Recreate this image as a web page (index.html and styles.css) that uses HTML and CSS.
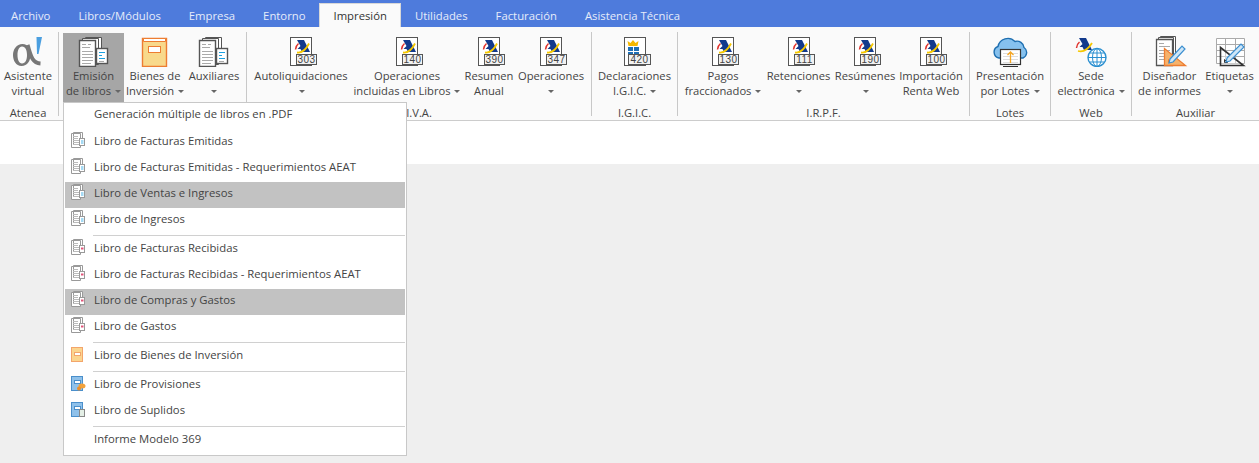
FILE: index.html
```html
<!DOCTYPE html>
<html lang="en">
<head>
    <meta charset="UTF-8">
    <title>Impresión</title>
    <link rel="stylesheet" href="styles.css">
</head>
<body>
    <!-- iconos -->
    <svg class="sprites" xmlns="http://www.w3.org/2000/svg">
        <symbol id="aeat-mark" viewBox="0 0 32 32">
            <path d="M12 5h7l6 12h-8l-1.500-3h-3l3-3z" fill="#123a8c"/>
            <path d="M10.500 14.500q.5-4 3-6" fill="none" stroke="#e0322c" stroke-width="1.500"/>
            <path d="M12 17.500q7 1 12-9" fill="none" stroke="#f6c800" stroke-width="1.800"/>
        </symbol>
        <symbol id="aeat-doc" viewBox="0 0 32 32">
            <rect x="5.500" y="2.500" width="21" height="28" fill="#fff" stroke="#555"/>
            <use href="#aeat-mark" width="32" height="32"/>
        </symbol>
        <symbol id="stack" viewBox="0 0 32 32">
            <path d="M7.500 2.500h16v26h-16z" fill="#fff" stroke="#555"/>
            <path d="M4.500 3.500h16v26h-16z" fill="#fff" stroke="#555"/>
            <path d="M1.500 5.500h16v26h-16z" fill="#fff" stroke="#555" stroke-width="1.400"/>
            <path d="M4 9.500h4M10 9.500h3M4 12.500h8M4 16.500h11M4 19.500h11M4 22.500h11M4 25.500h11M4 28.500h9" stroke="#aaa"/>
            <rect x="18.500" y="13.500" width="11" height="15" fill="#fff" stroke="#555" stroke-width="1.400"/>
            <path d="M21 17.500h6M21 20.500h3M21 23.500h6" stroke="#1ba1e2"/>
            <path d="M21 26.500h5" stroke="#aaa"/>
        </symbol>
        <symbol id="book" viewBox="0 0 32 32">
            <path d="M3.500 3.500h24v28h-24z" fill="#f8d98b" stroke="#ed7d31" stroke-width="1.400"/>
            <path d="M4.500 3.500h22v3h-22z" fill="#fff" stroke="#ed7d31"/>
            <rect x="9.500" y="11.500" width="12" height="6" fill="#fff" stroke="#ed7d31"/>
        </symbol>
        <symbol id="alpha" viewBox="0 0 32 32">
            <path fill-rule="evenodd" fill="#777" d="M10.500 9c-6 0-9.500 5.500-9.500 11s3 11 8.500 11c6 0 9-5.500 9-11s-2-11-8-11zM10 11.500c-3 0-4.500 4-4.500 8.500s1.500 8.500 4.500 8.500c3.500 0 5-4 5-8.500s-1.500-8.500-5-8.500z"/>
            <path d="M15.500 10c3 9 4 18 13 18.500" fill="none" stroke="#777" stroke-width="4"/>
            <path d="M24.500 2h5.500l-3.500 17h-1.500z" fill="#4b9fe0"/>
        </symbol>
        <symbol id="cloud" viewBox="0 0 36 32">
            <path d="M7 23a6 6 0 0 1-1-11.500a10 10 0 0 1 17-5a7 7 0 0 1 9 6a6 6 0 0 1-1 10.500z" fill="#86c1ee" stroke="#1f6fb0" stroke-width="1.400"/>
            <rect x="8.500" y="14.500" width="20" height="15" fill="#fff" stroke="#333" stroke-width="1.200"/>
            <path d="M11 31.500h15" stroke="#333"/>
            <path d="M11 18.500h15M11 21.500h15M11 24.500h15M11 27.500h15" stroke="#ddd"/>
            <path d="M18.500 28v-11M15.500 20l3-3 3 3" fill="none" stroke="#f5a623" stroke-width="1.300"/>
        </symbol>
        <symbol id="sede" viewBox="0 0 36 32">
            <path d="M6 3h7l6 12h-8l-1.500-3h-3l3-3z" fill="#123a8c"/>
            <path d="M3.500 13q.5-4 3-6" fill="none" stroke="#e0322c" stroke-width="1.500"/>
            <path d="M5 16q8 2 14-8" fill="none" stroke="#f6c800" stroke-width="1.800"/>
            <circle cx="24" cy="22.500" r="9" fill="#fff" stroke="#2a8fd0" stroke-width="1.400"/>
            <ellipse cx="24" cy="22.500" rx="4.500" ry="9" fill="none" stroke="#2a8fd0"/>
            <path d="M24 13.500v18M15 22.500h18M16.500 18h15M16.500 27h15" stroke="#2a8fd0"/>
        </symbol>
        <symbol id="designer" viewBox="0 0 36 32">
            <path d="M8.500 1.500h15v25h-15z" fill="#fff" stroke="#555"/>
            <path d="M6.500 2.500h15v26h-15z" fill="#fff" stroke="#555"/>
            <path d="M4.500 4.500h16v26h-16z" fill="#fff" stroke="#555" stroke-width="1.300"/>
            <path d="M7 8.500h5M7 11.500h11M7 15.500h11M7 18.500h5M7 21.500h5M7 24.500h5" stroke="#aaa"/>
            <path d="M12.500 13.500v17h21z" fill="#f6b26b" stroke="#ed7d31" stroke-width="1.300"/>
            <path d="M16.500 24.500v3h3z" fill="#fff" stroke="#ed7d31"/>
            <path d="M18 24l12-13 3 3-12 13-4 1z" fill="#cfe6f7" stroke="#3b8fd0" stroke-width="1.200"/>
        </symbol>
        <symbol id="labels" viewBox="0 0 36 32">
            <path d="M4.500 3.500h28v25h-28zM4.500 9.500h28M4.500 15.500h28M4.500 21.500h28M13.500 3.500v25M23.500 3.500v25" fill="#fff" stroke="#aaa"/>
            <path d="M8.500 12.500v18h23z" fill="#fff" fill-opacity=".4" stroke="#333" stroke-width="1.600"/>
            <path d="M12.500 24.500v3h3z" fill="none" stroke="#333"/>
            <path d="M15 23l14-14 3 3-14 14-4 1z" fill="#cfe6f7" stroke="#3b8fd0" stroke-width="1.200"/>
        </symbol>
        <symbol id="mini-blue" viewBox="0 0 16 16">
            <path d="M2.500.5h9v12h-9zM.5 1.500h9v14h-9z" fill="#fff" stroke="#999"/>
            <path d="M2 4.500h5M2 6.500h5M2 8.500h6M2 10.500h6M2 12.500h6" stroke="#bbb"/>
            <rect x="8.500" y="6.500" width="5" height="7" fill="#fff" stroke="#999"/>
            <path d="M10 9h2.500M10 11h2.500" stroke="#4ab4e8"/>
        </symbol>
        <symbol id="mini-pink" viewBox="0 0 16 16">
            <path d="M2.500.5h9v12h-9zM.5 1.500h9v14h-9z" fill="#fff" stroke="#999"/>
            <path d="M2 4.500h5M2 6.500h5M2 8.500h6M2 10.500h6M2 12.500h6" stroke="#bbb"/>
            <rect x="8.500" y="6.500" width="5" height="7" fill="#fff" stroke="#999"/>
            <path d="M10 9.500h2.500" stroke="#e0567a" stroke-width="2"/>
        </symbol>
        <symbol id="mini-book" viewBox="0 0 16 16">
            <rect x=".5" y="1.500" width="11" height="14" fill="#fbd58f" stroke="#f3a56b"/>
            <rect x="3.500" y="6.500" width="6" height="3" fill="#fff" stroke="#f3a56b"/>
        </symbol>
        <symbol id="mini-book-coin" viewBox="0 0 16 16">
            <rect x=".5" y="1.500" width="11" height="14" fill="#8fc1ea" stroke="#4a8fcb"/>
            <rect x="3.500" y="5.500" width="6" height="3" fill="#fff" stroke="#4a8fcb"/>
            <ellipse cx="11" cy="11" rx="3.500" ry="2.500" fill="#f2a23c"/>
            <circle cx="8" cy="13.500" r="2" fill="#ec8f2a"/>
        </symbol>
        <symbol id="mini-book-doc" viewBox="0 0 16 16">
            <rect x=".5" y="1.500" width="11" height="14" fill="#8fc1ea" stroke="#4a8fcb"/>
            <rect x="3.500" y="5.500" width="6" height="3" fill="#fff" stroke="#4a8fcb"/>
            <rect x="8.500" y="8.500" width="5" height="7" fill="#e4efe6" stroke="#888"/>
        </symbol>
    </svg>

    <!-- pestañas -->
    <div class="tabs">
        <div class="tab tab-file">Archivo</div>
        <div class="tab">Libros/Módulos</div>
        <div class="tab">Empresa</div>
        <div class="tab">Entorno</div>
        <div class="tab active">Impresión</div>
        <div class="tab">Utilidades</div>
        <div class="tab">Facturación</div>
        <div class="tab">Asistencia Técnica</div>
    </div>

    <!-- cinta de opciones -->
    <div class="ribbon">
        <div class="group group-atenea">
            <div class="buttons">
                <div class="rb"><svg class="ico"><use href="#alpha"/></svg><div class="rb-label">Asistente<br>virtual</div></div>
            </div>
            <div class="group-name">Atenea</div>
        </div>
        <div class="group group-books">
            <div class="buttons">
                <div class="rb pressed"><svg class="ico"><use href="#stack"/></svg><div class="rb-label">Emisión<br>de libros <i class="caret"></i></div></div>
                <div class="rb"><svg class="ico"><use href="#book"/></svg><div class="rb-label">Bienes de<br>Inversión <i class="caret"></i></div></div>
                <div class="rb"><svg class="ico"><use href="#stack"/></svg><div class="rb-label">Auxiliares<br><i class="caret"></i></div></div>
            </div>
        </div>
        <div class="group group-iva">
            <div class="buttons">
                <div class="rb"><svg class="ico"><use href="#aeat-doc"/><rect class="num-box" x="11.500" y="19.500" width="20" height="10"/><text class="num" x="21.500" y="28">303</text></svg><div class="rb-label">Autoliquidaciones<br><i class="caret"></i></div></div>
                <div class="rb"><svg class="ico"><use href="#aeat-doc"/><rect class="num-box" x="11.500" y="19.500" width="20" height="10"/><text class="num" x="21.500" y="28">140</text></svg><div class="rb-label">Operaciones<br>incluidas en Libros <i class="caret"></i></div></div>
                <div class="rb"><svg class="ico"><use href="#aeat-doc"/><rect class="num-box" x="11.500" y="19.500" width="20" height="10"/><text class="num" x="21.500" y="28">390</text></svg><div class="rb-label">Resumen<br>Anual</div></div>
                <div class="rb"><svg class="ico"><use href="#aeat-doc"/><rect class="num-box" x="11.500" y="19.500" width="20" height="10"/><text class="num" x="21.500" y="28">347</text></svg><div class="rb-label">Operaciones<br><i class="caret"></i></div></div>
            </div>
            <div class="group-name">I.V.A.</div>
        </div>
        <div class="group group-igic">
            <div class="buttons">
                <div class="rb">
                    <svg class="ico">
                        <rect x="5.500" y="2.500" width="21" height="28" fill="#fff" stroke="#555"/>
                        <path d="M9.500 11l-1-5 3 2 2.500-3 2.500 3 3-2-1 5z" fill="#f6b800"/>
                        <path d="M9 12h11v11H9z" fill="#1f6fb5"/>
                        <path d="M9 16.500h11M14.500 12v11" stroke="#fff"/>
                        <rect class="num-box" x="9.500" y="19.500" width="22" height="10"/>
                        <text class="num" x="20.500" y="28">420</text>
                    </svg>
                    <div class="rb-label">Declaraciones<br>I.G.I.C. <i class="caret"></i></div>
                </div>
            </div>
            <div class="group-name">I.G.I.C.</div>
        </div>
        <div class="group group-irpf">
            <div class="buttons">
                <div class="rb"><svg class="ico"><use href="#aeat-doc"/><rect class="num-box" x="11.500" y="19.500" width="20" height="10"/><text class="num" x="21.500" y="28">130</text></svg><div class="rb-label">Pagos<br>fraccionados <i class="caret"></i></div></div>
                <div class="rb"><svg class="ico"><use href="#aeat-doc"/><rect class="num-box" x="11.500" y="19.500" width="20" height="10"/><text class="num" x="21.500" y="28">111</text></svg><div class="rb-label">Retenciones<br><i class="caret"></i></div></div>
                <div class="rb"><svg class="ico"><use href="#aeat-doc"/><rect class="num-box" x="11.500" y="19.500" width="20" height="10"/><text class="num" x="21.500" y="28">190</text></svg><div class="rb-label">Resúmenes<br><i class="caret"></i></div></div>
                <div class="rb"><svg class="ico"><use href="#aeat-doc"/><rect class="num-box" x="11.500" y="19.500" width="20" height="10"/><text class="num" x="21.500" y="28">100</text></svg><div class="rb-label">Importación<br>Renta Web</div></div>
            </div>
            <div class="group-name">I.R.P.F.</div>
        </div>
        <div class="group group-lotes">
            <div class="buttons">
                <div class="rb"><svg class="ico ico-wide"><use href="#cloud"/></svg><div class="rb-label">Presentación<br>por Lotes <i class="caret"></i></div></div>
            </div>
            <div class="group-name">Lotes</div>
        </div>
        <div class="group group-web">
            <div class="buttons">
                <div class="rb"><svg class="ico ico-wide"><use href="#sede"/></svg><div class="rb-label">Sede<br>electrónica <i class="caret"></i></div></div>
            </div>
            <div class="group-name">Web</div>
        </div>
        <div class="group group-aux">
            <div class="buttons">
                <div class="rb"><svg class="ico ico-wide"><use href="#designer"/></svg><div class="rb-label">Diseñador<br>de informes</div></div>
                <div class="rb"><svg class="ico ico-wide"><use href="#labels"/></svg><div class="rb-label">Etiquetas<br><i class="caret"></i></div></div>
            </div>
            <div class="group-name">Auxiliar</div>
        </div>
    </div>

    <div class="strip"></div>

    <!-- menú desplegable -->
    <div class="menu">
        <div class="item first"><span class="item-ico"></span>Generación múltiple de libros en .PDF</div>
        <div class="item"><svg class="item-ico"><use href="#mini-blue"/></svg>Libro de Facturas Emitidas</div>
        <div class="item"><svg class="item-ico"><use href="#mini-blue"/></svg>Libro de Facturas Emitidas - Requerimientos AEAT</div>
        <div class="item hot"><svg class="item-ico"><use href="#mini-blue"/></svg>Libro de Ventas e Ingresos</div>
        <div class="item"><svg class="item-ico"><use href="#mini-blue"/></svg>Libro de Ingresos</div>
        <div class="sep"></div>
        <div class="item"><svg class="item-ico"><use href="#mini-pink"/></svg>Libro de Facturas Recibidas</div>
        <div class="item"><svg class="item-ico"><use href="#mini-pink"/></svg>Libro de Facturas Recibidas - Requerimientos AEAT</div>
        <div class="item hot"><svg class="item-ico"><use href="#mini-pink"/></svg>Libro de Compras y Gastos</div>
        <div class="item"><svg class="item-ico"><use href="#mini-pink"/></svg>Libro de Gastos</div>
        <div class="sep"></div>
        <div class="item"><svg class="item-ico"><use href="#mini-book"/></svg>Libro de Bienes de Inversión</div>
        <div class="sep"></div>
        <div class="item"><svg class="item-ico"><use href="#mini-book-coin"/></svg>Libro de Provisiones</div>
        <div class="item"><svg class="item-ico"><use href="#mini-book-doc"/></svg>Libro de Suplidos</div>
        <div class="sep"></div>
        <div class="item"><span class="item-ico"></span>Informe Modelo 369</div>
    </div>
</body>
</html>
```

FILE: styles.css
```css
* {
    margin: 0;
    padding: 0;
    box-sizing: border-box;
    font-family: "Open Sans", "Noto Sans", sans-serif;
}

body {
    background-color: #efefef;
    height: 100vh;
    overflow: hidden;
    position: relative;
    font-size: 12px;
    color: #444;
}

.sprites {
    display: none;
}

/* pestañas */
.tabs {
    display: flex;
    height: 27px;
    background-color: #4e7bdc;
    padding-top: 3px;
    font-size: 11.3px;
}

.tab {
    padding: 0 14px;
    line-height: 25px;
    color: #e6ecfa;
    white-space: nowrap;
}

.tab-file {
    padding-left: 11px;
}

.tab.active {
    background-color: #fafafa;
    color: #333;
    border: 1px solid #d8d8d8;
    border-bottom: none;
    padding: 0 13px;
    line-height: 23px;
}

/* cinta */
.ribbon {
    display: flex;
    height: 94px;
    background-color: #fafafa;
    border-bottom: 1px solid #ccc;
}

.group {
    height: 84px;
    margin-top: 5px;
    padding: 0 4px;
    border-right: 1px solid #c8c8c8;
}

.group:last-child {
    border-right: none;
}

.buttons {
    display: grid;
    height: 70px;
    padding-top: 1px;
}

.group-atenea { width: 59px; padding: 0 2px 0 0; }
.group-atenea .buttons { grid-template-columns: 56px; }
.group-books { width: 188px; }
.group-books .buttons { grid-template-columns: 61px 62px 56px; }
.group-iva { width: 345px; }
.group-iva .buttons { grid-template-columns: 100px 112px 52px 72px; }
.group-igic { width: 86px; }
.group-igic .buttons { grid-template-columns: 77px; }
.group-irpf { width: 292px; }
.group-irpf .buttons { grid-template-columns: 82px 69px 64px 68px; }
.group-lotes { width: 81px; }
.group-lotes .buttons { grid-template-columns: 72px; }
.group-web { width: 81px; }
.group-web .buttons { grid-template-columns: 72px; }
.group-aux { width: 127px; }
.group-aux .buttons { grid-template-columns: 67px 53px; }

.rb {
    display: flex;
    flex-direction: column;
    align-items: center;
    padding-top: 2px;
    height: 69px;
    white-space: nowrap;
}

.rb.pressed {
    background-color: #a6a6a6;
}

.ico {
    width: 32px;
    height: 32px;
    flex-shrink: 0;
    overflow: visible;
}

.ico-wide {
    width: 36px;
}

.rb-label {
    margin-top: 1px;
    line-height: 15px;
    text-align: center;
    font-size: 11.2px;
}

.caret {
    display: inline-block;
    width: 0;
    height: 0;
    margin-left: 1px;
    vertical-align: 2px;
    border-left: 3px solid transparent;
    border-right: 3px solid transparent;
    border-top: 3px solid #666;
}

.group-name {
    margin-top: 3px;
    line-height: 16px;
    text-align: center;
    font-size: 11.2px;
}

.num-box {
    fill: #f2f2f2;
    stroke: #555;
}

.num {
    font-family: "Liberation Sans", sans-serif;
    font-size: 10px;
    letter-spacing: 0.5px;
    text-anchor: middle;
    fill: #444;
}

.strip {
    height: 43px;
    background-color: #fff;
}

/* menú */
.menu {
    position: absolute;
    left: 63px;
    top: 102px;
    width: 344px;
    height: 354px;
    padding: 0 1px;
    background-color: #fff;
    border: 1px solid #c8c8c8;
}

.item {
    display: flex;
    align-items: center;
    height: 26px;
    padding: 0 0 6px 6px;
    font-size: 11.3px;
}

.item.first {
    margin-bottom: 1px;
}

.item.hot {
    background-color: #c2c2c2;
}

.item-ico {
    width: 16px;
    height: 16px;
    margin-right: 7px;
    flex-shrink: 0;
}

.sep {
    height: 1px;
    margin: 1px 0 1px 28px;
    background-color: #d0d0d0;
}
```
